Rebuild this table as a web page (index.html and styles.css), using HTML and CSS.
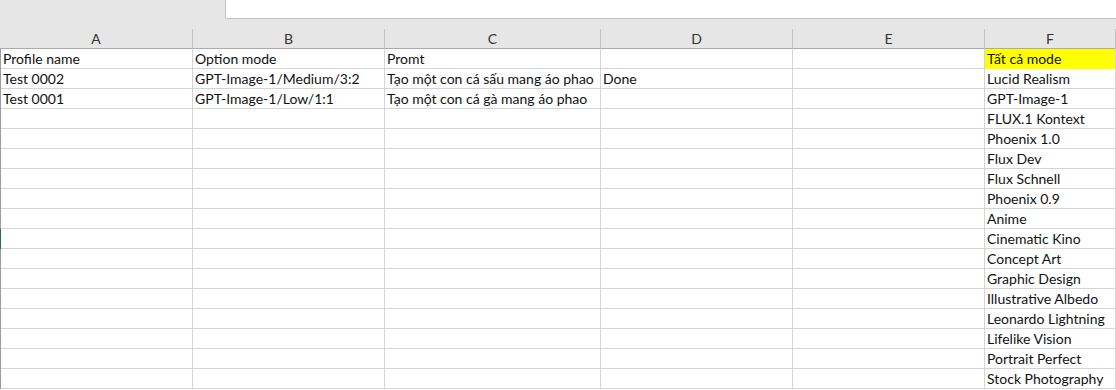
FILE: index.html
```html
<!DOCTYPE html>
<html lang="vi">
<head>
    <meta charset="UTF-8">
    <meta name="viewport" content="width=device-width, initial-scale=1.0">
    <title>Sheet1</title>
    <link rel="stylesheet" href="styles.css">
</head>
<body>

    <div class="topbar">
        <div class="namebox-area"></div>
        <div class="formula-box"></div>
    </div>
    <div class="gap-strip"></div>

    <div class="sheet">
        <div class="col-head">A</div>
        <div class="col-head">B</div>
        <div class="col-head">C</div>
        <div class="col-head">D</div>
        <div class="col-head">E</div>
        <div class="col-head">F</div>
    </div>

    <div class="grid" id="grid"></div>

    <script>
        var rows = [
            ["Profile name", "Option mode", "Promt", "", "", "Tất cả mode"],
            ["Test 0002", "GPT-Image-1/Medium/3:2", "Tạo một con cá sấu mang áo phao", "Done", "", "Lucid Realism"],
            ["Test 0001", "GPT-Image-1/Low/1:1", "Tạo một con cá gà mang áo phao", "", "", "GPT-Image-1"],
            ["", "", "", "", "", "FLUX.1 Kontext"],
            ["", "", "", "", "", "Phoenix 1.0"],
            ["", "", "", "", "", "Flux Dev"],
            ["", "", "", "", "", "Flux Schnell"],
            ["", "", "", "", "", "Phoenix 0.9"],
            ["", "", "", "", "", "Anime"],
            ["", "", "", "", "", "Cinematic Kino"],
            ["", "", "", "", "", "Concept Art"],
            ["", "", "", "", "", "Graphic Design"],
            ["", "", "", "", "", "Illustrative Albedo"],
            ["", "", "", "", "", "Leonardo Lightning"],
            ["", "", "", "", "", "Lifelike Vision"],
            ["", "", "", "", "", "Portrait Perfect"],
            ["", "", "", "", "", "Stock Photography"]
        ];

        var grid = document.getElementById("grid");
        rows.forEach(function (row, i) {
            var r = document.createElement("div");
            r.className = "row";
            // dong dang chon (hang 10)
            if (i === 9) r.classList.add("selected");
            row.forEach(function (text, j) {
                var c = document.createElement("div");
                c.className = "cell";
                if (i === 0 && j === 5) c.classList.add("yellow");
                c.textContent = text;
                r.appendChild(c);
            });
            grid.appendChild(r);
        });
    </script>

</body>
</html>
```

FILE: styles.css
```css
body {
    margin: 0;
    background-color: white;
    font-family: Lato, "Open Sans", sans-serif;
    font-size: 14px;
    color: #111;
    overflow: hidden;
    height: 390px;
}

.topbar {
    display: flex;
    height: 19px;
    background: #e6e6e6;
}

.namebox-area {
    width: 225px;
}

.formula-box {
    flex: 1;
    background: white;
    border-left: 1px solid #c6c6c6;
    border-bottom: 1px solid #c6c6c6;
}

.gap-strip {
    height: 10px;
    background: #e6e6e6;
}

.sheet,
.row {
    display: grid;
    grid-template-columns: 193px 192px 216px 192px 192px 1fr;
}

.sheet {
    height: 20px;
    background: #e6e6e6;
    border-bottom: 1px solid #ababab;
    box-sizing: border-box;
}

.col-head {
    text-align: center;
    color: #333;
    line-height: 20px;
    border-right: 1px solid #c4c4c4;
}

.row {
    height: 20px;
    box-sizing: border-box;
    border-bottom: 1px solid #d4d4d4;
}

.row .cell:first-child {
    border-left: 1px solid #9c9c9c;
}

.row.selected .cell:first-child {
    border-left-color: #217346;
}

.cell {
    border-right: 1px solid #d4d4d4;
    padding-left: 2px;
    line-height: 20px;
    white-space: nowrap;
    overflow: visible;
}

.yellow {
    background: #ffff00;
}
```
